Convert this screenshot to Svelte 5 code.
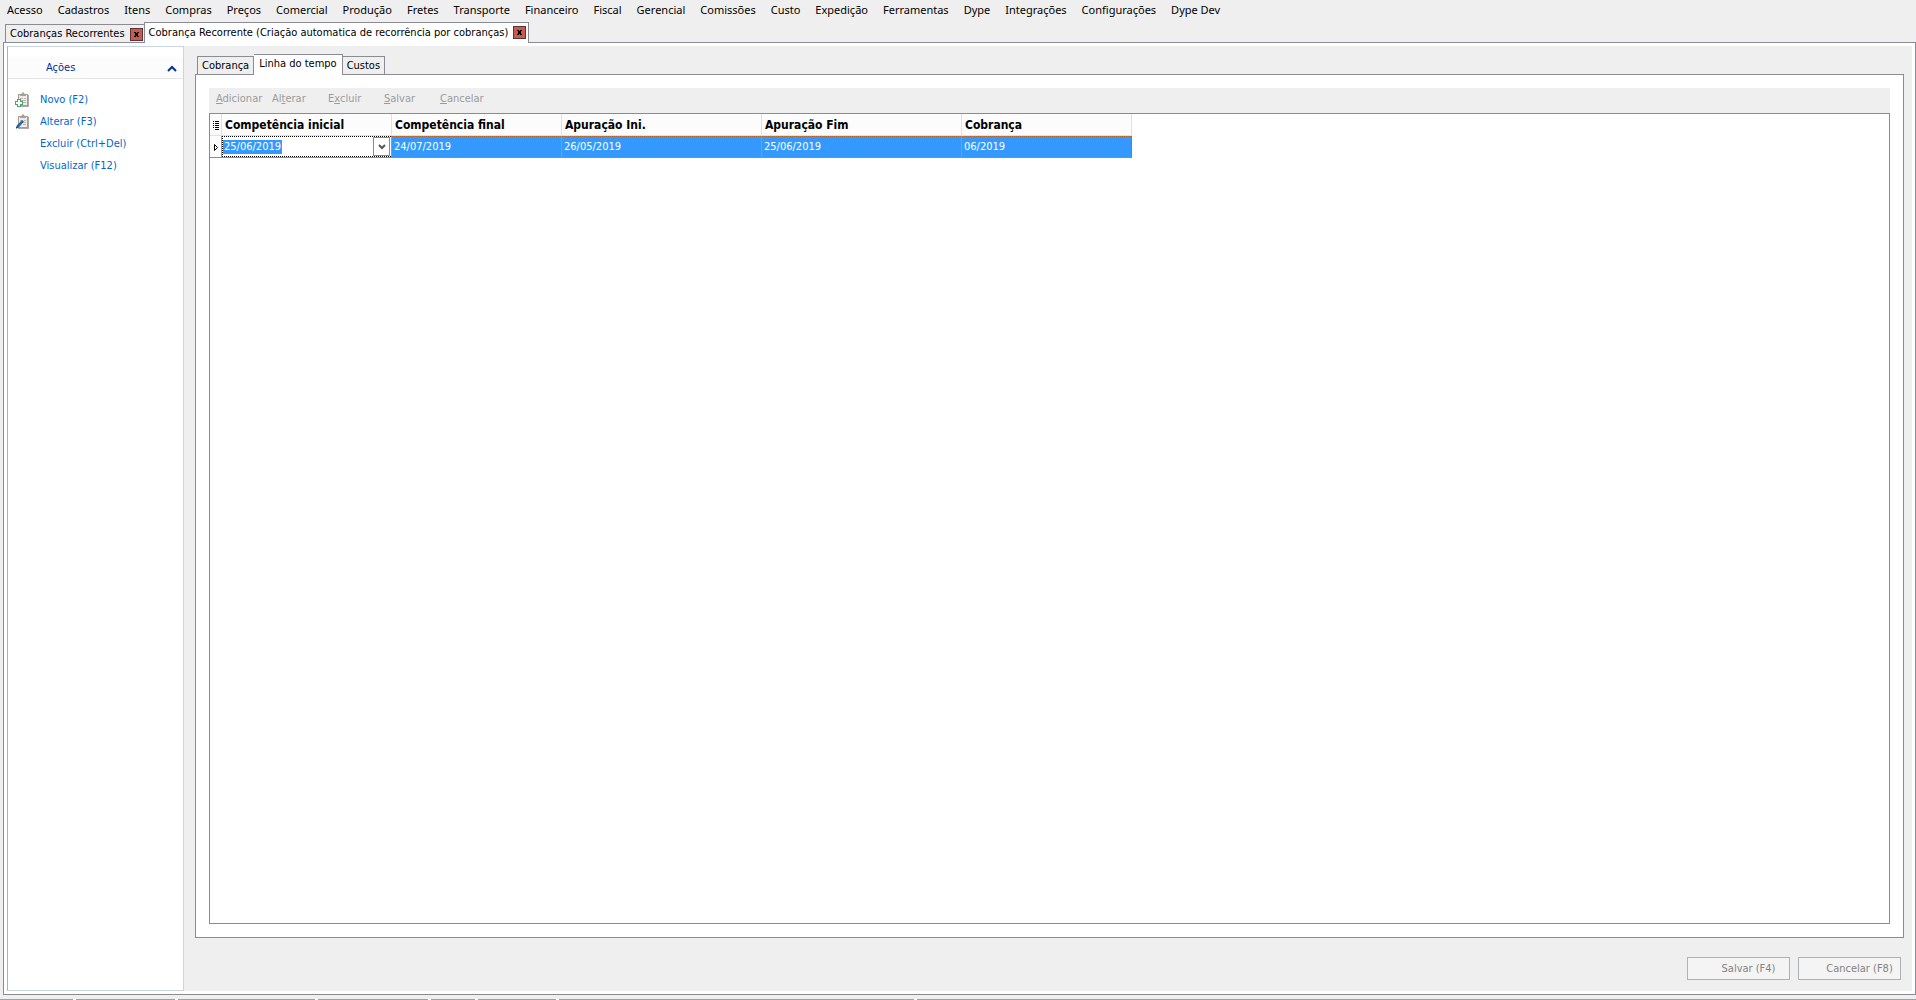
<script>
  const menu = [
    'Acesso', 'Cadastros', 'Itens', 'Compras', 'Preços', 'Comercial', 'Produção', 'Fretes',
    'Transporte', 'Financeiro', 'Fiscal', 'Gerencial', 'Comissões', 'Custo', 'Expedição',
    'Ferramentas', 'Dype', 'Integrações', 'Configurações', 'Dype Dev'
  ]

  const windows = [
    { title: 'Cobranças Recorrentes', active: false },
    { title: 'Cobrança Recorrente (Criação automatica de recorrência por cobranças)', active: true }
  ]

  const actions = [
    { label: 'Novo (F2)', icon: 'add' },
    { label: 'Alterar (F3)', icon: 'edit' },
    { label: 'Excluir (Ctrl+Del)' },
    { label: 'Visualizar (F12)' }
  ]

  let tab = $state('Linha do tempo')
  const tabs = ['Cobrança', 'Linha do tempo', 'Custos']

  // [before, accelerator, after]
  const tools = [
    ['', 'A', 'dicionar'],
    ['Al', 't', 'erar'],
    ['E', 'x', 'cluir'],
    ['', 'S', 'alvar'],
    ['', 'C', 'ancelar']
  ]

  const columns = [
    { title: 'Competência inicial', width: 170 },
    { title: 'Competência final', width: 170 },
    { title: 'Apuração Ini.', width: 200 },
    { title: 'Apuração Fim', width: 200 },
    { title: 'Cobrança', width: 170 }
  ]
  let start = $state('25/06/2019')
  const rest = ['24/07/2019', '26/05/2019', '25/06/2019', '06/2019']

  // status bar panel widths, the last one takes what is left
  const panels = [73, 99, 137, 110, 44, 78, 355]
  let open = $state(true)
</script>

<div class="app">
  <nav class="menu">
    {#each menu as item}<button>{item}</button>{/each}
  </nav>

  <div class="windows">
    {#each windows as w}
      <div class="window" class:active={w.active}>
        <button class="name">{w.title}</button>
        <button class="close" aria-label="Fechar">
          <svg width="11" height="11" viewBox="0 0 11 11" shape-rendering="crispEdges">
            <path d="M3 3h2v1H3zM6 3h2v1H6zM4 4h3v1H4zM4 5h3v1H4zM4 6h3v1H4zM3 7h2v1H3zM6 7h2v1H6z" />
          </svg>
        </button>
      </div>
    {/each}
  </div>

  <div class="frame">
    <aside>
      <button class="group" onclick={() => (open = !open)}>
        <span>Ações</span>
        <svg width="10" height="7" viewBox="0 0 10 7"><path d="M1 6l4-4 4 4" fill="none" stroke="#00309c" stroke-width="2" /></svg>
      </button>
      {#if open}
        <ul>
          {#each actions as a}
            <li>
              <span class="icon">
                {#if a.icon}
                  <svg width="14" height="15" viewBox="0 0 14 15">
                    <rect x="3.500" y="2.500" width="9" height="11" fill="#efedea" stroke="#b09a86" />
                    <path d="M13.500 3v11.500H3" fill="none" stroke="#8c857e" stroke-opacity=".7" />
                    <path d="M5 4V2h1.500L7 .5h2L9.500 2H11v2z" fill="#a3a09c" />
                    <path d="M5 6.500h3M9 6.500h2M6 8.500h5M8 10.500h3" stroke="#b9b6b2" />
                    {#if a.icon === 'add'}
                      <path d="M4 7v8M0 11h8" stroke="#4aa772" stroke-width="4" />
                      <path d="M4 8v6M1 11h6" stroke="#fff" stroke-width="2" />
                    {:else}
                      <path d="M1 14.500l.8-3L7 6l2 1.500-5.200 6z" fill="#2368a8" />
                      <path d="M1 14.500l.5-2 1.300 1.200z" fill="#234" />
                    {/if}
                  </svg>
                {/if}
              </span>
              <a href="#acao">{a.label}</a>
            </li>
          {/each}
        </ul>
      {/if}
    </aside>

    <main>
      <div class="tabs" role="tablist">
        {#each tabs as t}
          <button role="tab" aria-selected={t === tab} class:active={t === tab} onclick={() => (tab = t)}>{t}</button>
        {/each}
      </div>

      <section>
        <div class="tools">
          {#each tools as [a, key, b]}<button disabled>{a}<u>{key}</u>{b}</button>{/each}
        </div>
        <div class="grid">
          <table>
            <colgroup>
              <col style="width:12px" />
              {#each columns as c}<col style="width:{c.width}px" />{/each}
            </colgroup>
            <thead>
              <tr>
                <th class="mark">
                  <svg width="7" height="10" viewBox="0 0 7 10" shape-rendering="crispEdges">
                    <path d="M0 1h1v1H0zM2 1h4v1H2zM0 3h1v1H0zM2 3h4v1H2zM0 5h1v1H0zM2 5h4v1H2zM0 7h1v1H0zM2 7h4v1H2zM2 9h4v1H2z" />
                  </svg>
                </th>
                {#each columns as c}<th>{c.title}</th>{/each}
              </tr>
            </thead>
            <tbody>
              <tr>
                <td class="mark">
                  <svg width="7" height="9" viewBox="0 0 7 9"><path d="M1.500 1.500v6l3-3z" fill="#fff" stroke="#000" /></svg>
                </td>
                <td class="edit">
                  <div class="combo">
                    <input type="text" aria-label="Competência inicial" bind:value={start} />
                    <button aria-label="Abrir calendário">
                      <svg width="8" height="6" viewBox="0 0 8 6"><path d="M1 1l3 3 3-3" fill="none" stroke="#555" stroke-width="2" /></svg>
                    </button>
                  </div>
                </td>
                {#each rest as v}<td>{v}</td>{/each}
              </tr>
            </tbody>
          </table>
        </div>
      </section>

      <footer>
        <button disabled>Salvar (F4)</button>
        <button disabled>Cancelar (F8)</button>
      </footer>
    </main>
  </div>

  <div class="status">
    {#each panels as w}<span style="width:{w}px"></span>{/each}
    <span class="fill"></span>
  </div>
</div>

<style>
  :global(body) { margin: 0; }
  * { box-sizing: border-box; }
  .app {
    min-height: 100vh;
    display: flex;
    flex-direction: column;
    background: #efefef;
    color: #000;
    font: 11px/14px 'DejaVu Sans Condensed', 'DejaVu Sans', sans-serif;
  }
  button, input { font: inherit; color: inherit; margin: 0; padding: 0; border: 0; background: none; border-radius: 0; white-space: nowrap; }
  svg { display: block; }

  .menu { display: flex; gap: 15px; height: 20px; padding: 0 7px; font-family: 'Noto Sans', sans-serif; }

  .windows { display: flex; align-items: flex-end; height: 22px; padding-left: 5px; }
  .window {
    display: flex;
    align-items: center;
    gap: 5px;
    height: 18px;
    padding: 1px 1px 0 4px;
    border: 1px solid #8b8b96;
    border-width: 1px 0 0 1px;
  }
  .window.active {
    position: relative;
    height: 21px;
    margin-bottom: -1px;
    padding: 0 2px 1px 4px;
    border-right-width: 1px;
    background: #fff;
  }
  .close { width: 13px; height: 13px; border: 1px solid #5d3434; background: #c75b50; }

  .frame {
    flex: 1;
    display: flex;
    margin-left: 3px;
    padding: 3px;
    border: 1px solid #8b8b96;
    background: #fff;
  }

  aside { flex: none; width: 177px; border: 1px solid #c8d6e2; border-left-color: #a5b4c2; padding-top: 10px; }
  .group {
    display: flex;
    align-items: center;
    justify-content: space-between;
    width: 100%;
    height: 22px;
    padding: 1px 6px 0 38px;
    border-bottom: 1px solid #e6e6e6;
    background: #fcfcfc;
    color: #00309c;
  }
  ul { list-style: none; margin: 0; padding: 9px 0 0 7px; }
  li { display: flex; align-items: center; height: 22px; }
  .icon { width: 25px; }
  a { padding-top: 2px; color: #0066cc; text-decoration: none; }

  main { flex: 1; min-width: 0; display: flex; flex-direction: column; padding: 8px 8px 11px 11px; background: #efefef; }

  .tabs { display: flex; align-items: flex-end; height: 20px; padding-left: 2px; }
  .tabs button { height: 18px; padding: 1px 4px 0; border: 1px solid #8b8b96; border-bottom: 0; }
  .tabs button + button { border-left: 0; }
  .tabs .active { position: relative; height: 21px; margin-bottom: -1px; padding: 0 5px 2px; background: #fff; }

  section { flex: 1; display: flex; flex-direction: column; padding: 13px; border: 1px solid #8b8b96; background: #fff; }
  .tools { display: grid; grid-template-columns: repeat(5, 56px); height: 25px; padding: 0 7px 4px; background: #efefef; color: #9b9b9b; }
  .tools button { text-align: left; }

  .grid { flex: 1; border: 1px solid #8b8b96; }
  table { table-layout: fixed; width: 922px; border-collapse: separate; border-spacing: 0; }
  th, td { height: 22px; padding: 1px 0 0; text-align: left; white-space: nowrap; }
  th { padding-left: 3px; font-size: 12px; background: #fcfcfc; border: 1px solid #e0e0e0; border-width: 0 1px 1px 0; }
  td {
    padding-left: 2px;
    color: #fff;
    background: #3399ff;
    border-right: 1px solid #8a9bb5;
    border-bottom: 1px solid #8b8b96;
    background-image: repeating-linear-gradient(90deg, #b0662c 0 1px, transparent 1px 2px);
    background-size: 100% 1px;
    background-repeat: no-repeat;
  }
  td:last-child { border-right: 1px dotted #b0662c; }
  .mark { padding-left: 3px; background: #fcfcfc; }
  td.edit { padding: 0; color: #fff; background: #fff; }
  .combo { display: flex; align-items: center; height: 21px; border: 1px dotted #000; border-right: 0; }
  .combo input { width: 59px; height: 14px; padding-left: 1px; background: #3399ff; border-right: 1px solid #c87a3a; }
  .combo button {
    display: grid;
    place-items: center;
    width: 17px;
    height: 19px;
    margin-left: auto;
    margin-right: 1px;
    border: 1px solid #8b8b96;
    background: #fff;
  }

  footer { display: flex; justify-content: flex-end; gap: 8px; padding: 19px 3px 0 0; }
  footer button { width: 103px; height: 23px; padding-left: 20px; border: 1px solid #adb2b5; background: #f4f4f4; color: #838383; }

  .status { display: flex; gap: 3px; height: 5px; padding-top: 4px; background: linear-gradient(#efefef 4px, #fff 4px); }
  .status span { background: #a0a0a0; }
  .status .fill { flex: 1; }
</style>
